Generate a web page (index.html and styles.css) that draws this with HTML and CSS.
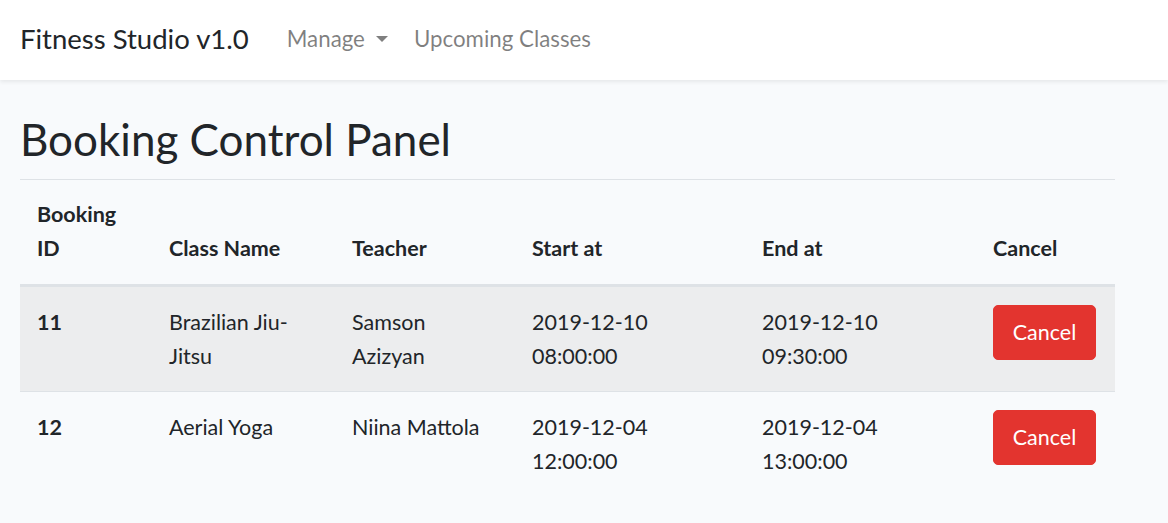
FILE: index.html
```html
<!DOCTYPE html>
<html lang="en">
<head>
<meta charset="utf-8">
<title>Fitness Studio v1.0</title>
<link rel="stylesheet" href="styles.css">
</head>
<body>
<nav class="navbar">
  <a class="brand" href="#">Fitness Studio v1.0</a>
  <ul class="nav">
    <li><a class="nav-link" href="#">Manage<span class="caret"></span></a></li>
    <li><a class="nav-link" href="#">Upcoming Classes</a></li>
  </ul>
</nav>
<main class="container">
  <h1 class="title">Booking Control Panel</h1>
  <table class="table">
    <thead>
      <tr>
        <th class="c-id">Booking ID</th>
        <th class="c-class">Class Name</th>
        <th class="c-teacher">Teacher</th>
        <th class="c-start">Start at</th>
        <th class="c-end">End at</th>
        <th class="c-cancel">Cancel</th>
      </tr>
    </thead>
    <tbody>
      <tr class="striped">
        <th>11</th>
        <td>Brazilian Jiu-Jitsu</td>
        <td>Samson Azizyan</td>
        <td>2019-12-10 08:00:00</td>
        <td>2019-12-10 09:30:00</td>
        <td><button class="btn-danger" type="button">Cancel</button></td>
      </tr>
      <tr>
        <th>12</th>
        <td>Aerial Yoga</td>
        <td>Niina Mattola</td>
        <td>2019-12-04 12:00:00</td>
        <td>2019-12-04 13:00:00</td>
        <td><button class="btn-danger" type="button">Cancel</button></td>
      </tr>
    </tbody>
  </table>
</main>
</body>
</html>
```
FILE: styles.css
```css
* { box-sizing: border-box; }
html, body { margin: 0; padding: 0; }
body {
  background: #f8fafc;
  color: #212529;
  font-family: "Lato", "Open Sans", sans-serif;
  font-size: 21.5px;
  line-height: 34px;
}
.navbar {
  height: 80px;
  background: #fff;
  box-shadow: 0 2px 4px rgba(0,0,0,0.075);
  display: flex;
  align-items: center;
  padding: 0 20px 3px 20px;
}
.brand {
  color: #212529;
  text-decoration: none;
  font-size: 27.5px;
  margin-right: 38px;
}
.nav {
  list-style: none;
  margin: 0;
  padding: 0;
  display: flex;
  gap: 26px;
}
.nav-link {
  color: rgba(0,0,0,0.5);
  text-decoration: none;
  font-size: 22.3px;
  display: inline-flex;
  align-items: center;
}
.caret {
  display: inline-block;
  width: 0;
  height: 0;
  margin-left: 11px;
  border-top: 6px solid rgba(0,0,0,0.5);
  border-left: 6px solid transparent;
  border-right: 6px solid transparent;
}
.container {
  margin-left: 20px;
  width: 1095px;
}
.title {
  font-size: 44px;
  font-weight: 400;
  line-height: 55px;
  margin: 32px 0 12px 0;
}
.table {
  width: 100%;
  border-collapse: collapse;
}
.table th, .table td {
  padding: 18px 17px;
  text-align: left;
  vertical-align: top;
  border-top: 1px solid #dee2e6;
}
.table th { font-weight: 700; }
.table thead th {
  padding-top: 17px;
  padding-bottom: 19px;
  vertical-align: bottom;
  border-bottom: 3px solid #dee2e6;
}
.table td { font-weight: 400; }
.c-id { width: 132px; }
.c-class { width: 183px; }
.c-teacher { width: 180px; }
.c-start { width: 230px; }
.c-end { width: 231px; }
.c-cancel { width: 139px; }
.striped { background: #ecedee; }
.btn-danger {
  font-family: inherit;
  font-size: 21.5px;
  line-height: 33px;
  color: #fff;
  background: #e3342f;
  border: 1px solid #e3342f;
  border-radius: 5px;
  padding: 10px 0;
  width: 103px;
  height: 55px;
  cursor: pointer;
}
```
